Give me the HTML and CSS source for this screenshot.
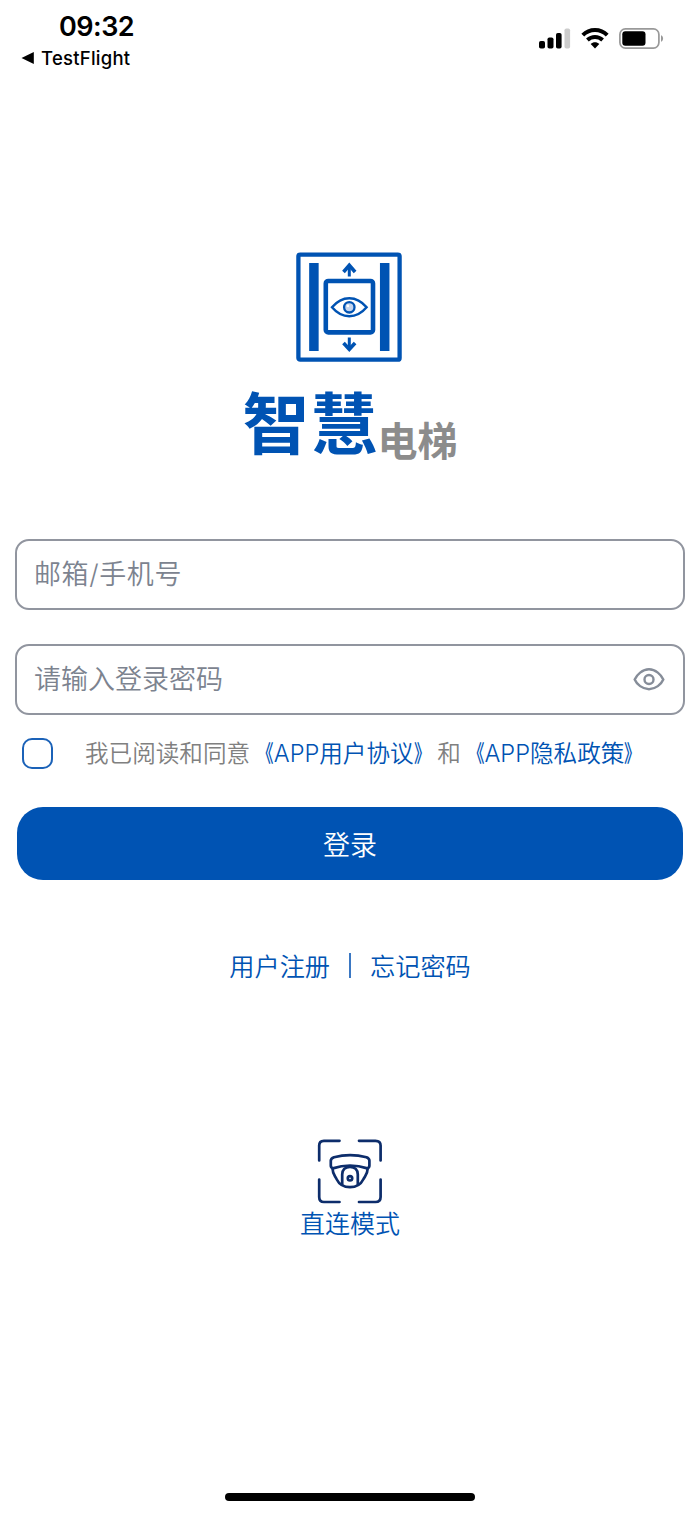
FILE: index.html
```
<!DOCTYPE html>
<html lang="zh-CN">
<head>
    <meta charset="UTF-8">
    <meta name="viewport" content="width=device-width, initial-scale=1.0">
    <title>智慧电梯</title>
    <link rel="stylesheet" href="styles.css">
</head>
<body>
    <header class="status-bar">
        <div class="status-left">
            <div class="time">09:32</div>
            <div class="back-app">
                <svg width="13" height="12" viewBox="0 0 13 12"><path d="M0.5 6 L12.8 0 V12 Z"/></svg>
                <span>TestFlight</span>
            </div>
        </div>
        <div class="status-icons">
            <!-- Signal -->
            <svg width="32" height="22" viewBox="0 0 32 22">
                <rect x="0" y="13" width="6" height="7.5" rx="1.8"/>
                <rect x="8.5" y="9.5" width="6" height="11" rx="1.8"/>
                <rect x="17" y="5" width="5.6" height="15.5" rx="1.8"/>
                <rect x="25.5" y="0.5" width="5.6" height="20" rx="1.8" fill="#ccc"/>
            </svg>
            <!-- Wifi -->
            <svg class="wifi" width="28" height="22" viewBox="0 0 28 22">
                <g fill="none" stroke="#000" stroke-width="4">
                    <path d="M1.8 7.2 C8.5 0.4 19.5 0.4 26.2 7.2"/>
                    <path d="M6.4 12.1 C10.8 8.1 17.2 8.1 21.6 12.1"/>
                </g>
                <path d="M9.7 16 C12.1 13.8 15.9 13.8 18.3 16 L14 20.4 Z"/>
            </svg>
            <!-- Battery -->
            <svg class="battery" width="45" height="22" viewBox="0 0 45 22">
                <rect x="0.9" y="0.9" width="39" height="19.2" rx="5.5" fill="none" stroke="#999" stroke-width="1.7"/>
                <rect x="3.3" y="3.3" width="23.2" height="14.4" rx="3"/>
                <path d="M42 7.2 C44.8 8.3 44.8 12.7 42 13.8 Z" fill="#999"/>
            </svg>
        </div>
    </header>

    <main class="login">
        <div class="logo">
            <svg class="logo-icon" width="106" height="110" viewBox="0 0 106 110" fill="none" stroke="#0053b3">
                <rect x="2.4" y="2.7" width="101.2" height="105" rx="1.8" stroke-width="4.3"/>
                <path d="M17.9 11 V99 M88.7 11 V99" stroke-width="9.5"/>
                <rect x="29.8" y="29" width="47.2" height="51.4" rx="2.5" stroke-width="4.6"/>
                <!-- Arrows -->
                <path d="M53.3 24.5 V13 M53.3 85.5 V97" stroke-width="3"/>
                <path d="M47.5 20 L53.3 13.3 L59.1 20 M47.5 91 L53.3 97.3 L59.1 91" stroke-width="3.6"/>
                <!-- Eye -->
                <path d="M36 55.3 C46 43.2 60.6 43.2 70.6 55.3 C60.6 67.2 46 67.2 36 55.3 Z" stroke-width="2.5"/>
                <circle cx="53.3" cy="55.3" r="5.2" fill="#c4d4ed" stroke-width="2.3"/>
                <circle cx="51.9" cy="53.9" r="1.3" fill="#fff" stroke="none"/>
            </svg>
            <h1 class="brand"><span class="brand-main">智慧</span><span class="brand-sub">电梯</span></h1>
        </div>

        <form class="login-form">
            <div class="field">
                <input type="text" class="account" placeholder="邮箱/手机号">
            </div>
            <div class="field">
                <input type="password" placeholder="请输入登录密码">
                <svg width="32" height="24" viewBox="0 0 32 24" fill="none" stroke="#868d99" stroke-width="2.4">
                    <path d="M1.7 11.5 C3.7 6.7 9.5 1.3 16 1.3 C22.5 1.3 28.3 6.7 30.3 11.5 C28.3 16.3 22.5 21.2 16 21.2 C9.5 21.2 3.7 16.3 1.7 11.5 Z"/>
                    <circle cx="16" cy="11.5" r="4.5"/>
                </svg>
            </div>
            <label class="terms">
                <input type="checkbox">
                <span class="terms-text">我已阅读和同意<a><span class="open">《</span>APP用户协议<span class="close">》</span></a>和<a><span class="open">《</span>APP隐私政策<span class="close">》</span></a></span>
            </label>
            <button type="button" class="login-button">登录</button>
        </form>

        <nav class="links">
            <a>用户注册</a>
            <span class="divider"></span>
            <a>忘记密码</a>
        </nav>

        <div class="direct-mode">
            <svg width="66" height="66" viewBox="0 0 66 66" fill="none" stroke="#0d2d6b" stroke-width="2.7" stroke-linecap="round" stroke-linejoin="round">
                <path d="M2.2 21.5 V6.5 Q2.2 1.8 6.9 1.8 H22.5 M42 1.8 H58.5 Q63.6 1.8 63.6 6.5 V21.5 M63.6 40.5 V58 Q63.6 63 58.5 63 H42 M22.5 63 H6.9 Q2.2 63 2.2 58 V40.5"/>
                <!-- Dome camera -->
                <path d="M13.8 21.5 Q14 19.4 17 18.2 Q33 14 49.5 18.2 Q52.3 19.4 52.4 21.5 V26.5 Q52.4 28.6 50.4 29.4 Q33 23.6 15.8 29.4 Q13.8 28.6 13.8 26.5 Z"/>
                <path d="M15.6 30 C15.6 35 17.8 36.5 19.8 40.5 C22.3 45.7 27 48.2 33 48.2 C39 48.2 43.7 45.7 46.2 40.5 C48.2 36.5 50.6 35 50.6 30"/>
                <path d="M25.2 45.5 V35.5 Q25.4 28 33 28 Q40.6 28 40.8 35.5 V45.5"/>
                <circle cx="33" cy="39.3" r="2.2"/>
            </svg>
            <span>直连模式</span>
        </div>
    </main>

    <div class="home-indicator"></div>
</body>
</html>
```
FILE: styles.css
```
* {
    box-sizing: border-box;
}

body {
    margin: 0;
    height: 1515px;
    background-color: #fff;
    display: flex;
    flex-direction: column;
    font-family: Inter, "Noto Sans CJK SC", sans-serif;
    font-weight: 350;
    overflow: hidden;
}

svg {
    display: block;
    flex-shrink: 0;
}

/* Status bar */
.status-bar {
    height: 80px;
    padding: 10px 36px 0 21px;
    display: flex;
    justify-content: space-between;
    color: #000;
}

.time {
    padding-left: 38px;
    font-size: 27px;
    font-weight: 600;
    line-height: 34px;
    letter-spacing: -0.5px;
}

.back-app {
    display: flex;
    align-items: center;
    gap: 7px;
    font-size: 18.5px;
    font-weight: 500;
    line-height: 28px;
    letter-spacing: 0.25px;
}

.status-icons {
    display: flex;
    padding-top: 18px;
}

.wifi {
    margin-left: 10px;
}

.battery {
    margin-left: 10px;
}

/* Logo */
.login {
    flex: 1;
    padding: 172px 15px 0;
}

.logo {
    display: flex;
    flex-direction: column;
    align-items: center;
}

.logo-icon {
    margin-right: 2px;
}

.brand {
    margin: 13px 0 0;
    height: 93px;
    display: flex;
    align-items: flex-start;
    font-family: "Noto Sans CJK SC", sans-serif;
    line-height: 89px;
}

.brand-main {
    font-size: 67px;
    letter-spacing: 1px;
    color: #0053b3;
}

.brand-sub {
    margin-left: -1px;
    padding-top: 20px;
    font-size: 40px;
    color: #8c8c8c;
}

/* Form */
.login-form {
    margin-top: 71px;
    display: flex;
    flex-direction: column;
}

.field {
    height: 71px;
    margin-bottom: 34px;
    padding: 0 18px 0 17px;
    display: flex;
    align-items: center;
    border: 2px solid #91959f;
    border-radius: 14px;
}

.field input {
    flex: 1;
    min-width: 0;
    padding: 0;
    border: none;
    outline: none;
    background: none;
    font-family: inherit;
    font-size: 27px;
    font-weight: inherit;
}

.field .account {
    letter-spacing: 0.6px;
}

.field input::placeholder {
    color: #7c838f;
    opacity: 1;
}

.terms {
    height: 36px;
    margin-top: -14px;
    padding-left: 7px;
    display: flex;
    align-items: center;
    font-size: 23.6px;
    color: #808080;
    white-space: nowrap;
}

.terms input {
    appearance: none;
    width: 31px;
    height: 31px;
    margin: 0 32px 0 0;
    border: 2px solid #1b62b8;
    border-radius: 10px;
}

.terms-text {
    padding-bottom: 2px;
}

/* Narrow title marks that sit close to the name */
.open,
.close {
    display: inline-block;
    font-weight: 500;
    transform: scaleX(0.7);
}

.open {
    transform-origin: right;
}

.close {
    transform-origin: left;
}

.terms a,
.links a {
    color: #0053b3;
}

.login-button {
    height: 73px;
    margin: 36px 2px 0;
    padding-bottom: 2px;
    border: none;
    border-radius: 26px;
    background-color: #0053b3;
    color: #fff;
    font-family: inherit;
    font-size: 27px;
    font-weight: inherit;
}

/* Register and password links */
.links {
    margin-top: 67px;
    height: 36px;
    display: flex;
    justify-content: center;
    align-items: center;
    font-size: 25.2px;
}

.divider {
    width: 2px;
    height: 25px;
    margin: 0 19px;
    background-color: #3b78c3;
}

/* Direct connection */
.direct-mode {
    margin-top: 156px;
    display: flex;
    flex-direction: column;
    align-items: center;
    font-size: 25px;
    line-height: 38px;
    color: #0053b3;
}

.home-indicator {
    width: 250px;
    height: 8px;
    margin: 0 auto 14px;
    border-radius: 4px;
    background-color: #000;
}
```
